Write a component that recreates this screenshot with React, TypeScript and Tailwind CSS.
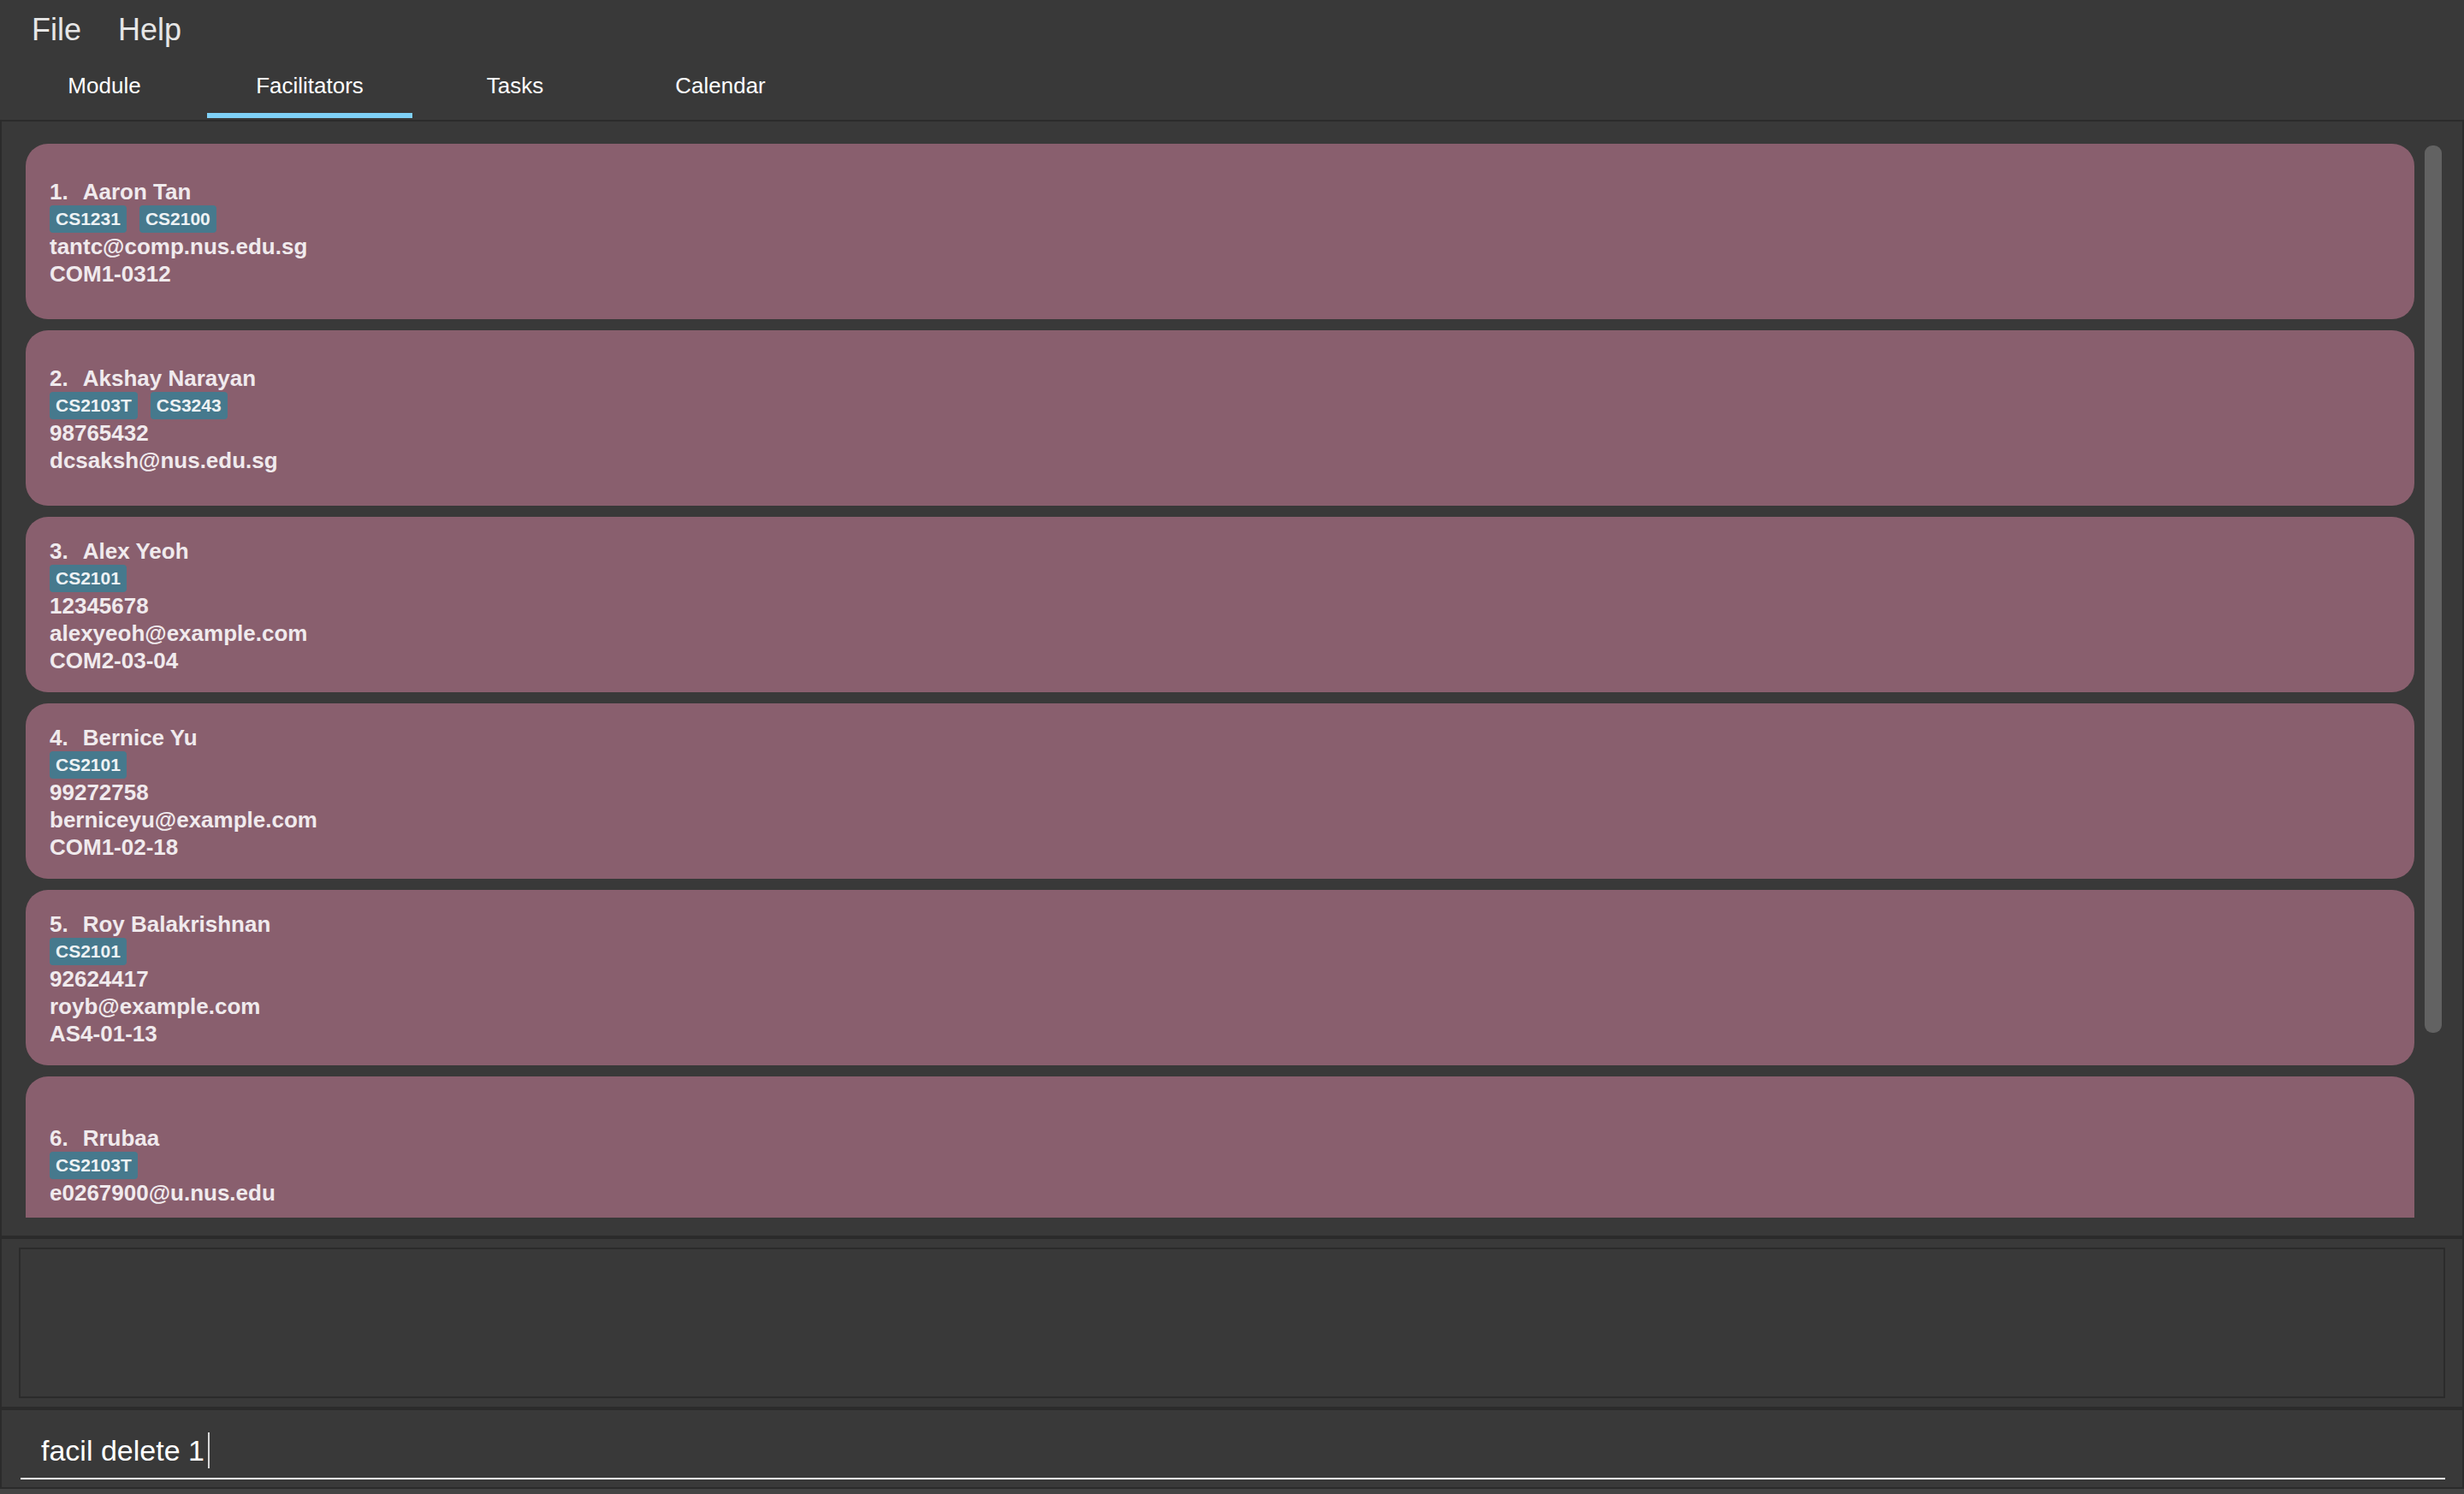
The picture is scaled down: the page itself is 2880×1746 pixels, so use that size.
import React from 'react'

interface Facilitator {
  id: number
  name: string
  modules: string[]
  lines: string[]
}

const facilitators: Facilitator[] = [
  { id: 1, name: 'Aaron Tan', modules: ['CS1231', 'CS2100'], lines: ['tantc@comp.nus.edu.sg', 'COM1-0312'] },
  { id: 2, name: 'Akshay Narayan', modules: ['CS2103T', 'CS3243'], lines: ['98765432', 'dcsaksh@nus.edu.sg'] },
  { id: 3, name: 'Alex Yeoh', modules: ['CS2101'], lines: ['12345678', 'alexyeoh@example.com', 'COM2-03-04'] },
  { id: 4, name: 'Bernice Yu', modules: ['CS2101'], lines: ['99272758', 'berniceyu@example.com', 'COM1-02-18'] },
  { id: 5, name: 'Roy Balakrishnan', modules: ['CS2101'], lines: ['92624417', 'royb@example.com', 'AS4-01-13'] },
  { id: 6, name: 'Rrubaa', modules: ['CS2103T'], lines: ['e0267900@u.nus.edu'] },
]

const tabs = ['Module', 'Facilitators', 'Tasks', 'Calendar']

function FacilitatorCard({ f }: { f: Facilitator }) {
  return (
    <div className="flex h-[205px] shrink-0 flex-col justify-center rounded-[26px] bg-[#895f6e] pl-[28px] pt-[3px] text-[26px] leading-[32px] font-bold text-[#f0eaed]">
      <div className="flex">
        <span className="pr-[17px]">{f.id}.</span>
        <span>{f.name}</span>
      </div>
      <div className="flex h-[32px] gap-[15px]">
        {f.modules.map((m) => (
          <span
            key={m}
            className="h-[32px] rounded-[4px] bg-[#46798d] px-[7px] text-[21px] leading-[32px] text-[#eef2f4]"
          >
            {m}
          </span>
        ))}
      </div>
      {f.lines.map((l) => (
        <div key={l}>{l}</div>
      ))}
    </div>
  )
}

export default function App() {
  return (
    <div className="flex h-[1746px] w-[2880px] flex-col overflow-hidden bg-[#393939] font-['Liberation_Sans',Arial,sans-serif]">
      {/* menu */}
      <div className="flex h-[64px] shrink-0 gap-[43px] pl-[37px] pt-[15px] text-[36px] leading-[40px] text-[#e6e6e6]">
        <span>File</span>
        <span>Help</span>
      </div>

      {/* tabs */}
      <div className="flex h-[76px] shrink-0 pl-[2px]">
        {tabs.map((t) => (
          <div key={t} className="flex w-[240px] flex-col items-center">
            <span className="pt-[21px] text-[26px] leading-[30px] text-white">{t}</span>
            <div className={`mb-[2px] mt-auto h-[6px] w-full ${t === 'Facilitators' ? 'bg-[#7fd1f7]' : ''}`} />
          </div>
        ))}
      </div>

      {/* list */}
      <div className="flex h-[1308px] shrink-0 border-x-2 border-b-4 border-t-2 border-[#2b2b2b] pl-[28px] pr-[24px]">
        <div className="flex flex-1 flex-col pb-[21px]">
          <div className="flex flex-1 flex-col gap-[13px] overflow-hidden pt-[26px]">
            {facilitators.map((f) => (
              <FacilitatorCard key={f.id} f={f} />
            ))}
          </div>
        </div>
        <div className="ml-[12px] mt-[28px] h-[1037px] w-[20px] rounded-[9px] bg-[#626262]" />
      </div>

      {/* result display */}
      <div className="h-[200px] shrink-0 border-x-2 border-b-4 border-[#2b2b2b] px-[20px] pt-[10px]">
        <div className="h-[176px] border-2 border-[#2b2b2b]" />
      </div>

      {/* command box */}
      <div className="h-[92px] shrink-0 border-x-2 border-b-2 border-[#2b2b2b]">
        <div className="flex items-center pl-[46px] pt-[26px] text-[34px] leading-[40px] text-white">
          <span>facil delete 1</span>
          <span className="ml-[4px] inline-block h-[42px] w-[2px] bg-[#d8d8d8]" />
        </div>
        <div className="ml-[22px] mr-[20px] mt-[11px] h-[2px] bg-white" />
      </div>

      <div className="h-[6px] shrink-0 bg-[#444444]" />
    </div>
  )
}
